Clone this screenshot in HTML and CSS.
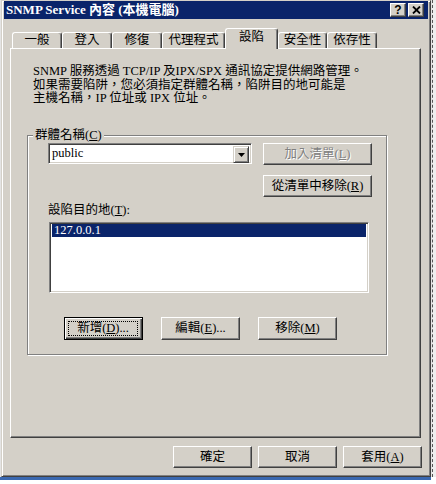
FILE: index.html
```html
<!DOCTYPE html>
<html lang="zh-Hant">
<head>
<meta charset="utf-8">
<title>SNMP Service 內容 (本機電腦)</title>
<link rel="stylesheet" href="styles.css">
</head>
<body>
<div class="screen">
  <div class="desk">
    <div class="win">
      <div class="titlebar">
        <div class="title">SNMP Service 內容 (本機電腦)</div>
        <div class="caps">
          <div class="cap cap-help">?</div>
          <div class="cap">
            <svg width="9" height="8" viewBox="0 0 9 8"><path d="M1 0.5 L8 7.5 M8 0.5 L1 7.5" stroke="#000" stroke-width="1.8" fill="none"/></svg>
          </div>
        </div>
      </div>

      <div class="tabs">
        <div class="tab w50">一般</div>
        <div class="tab w50">登入</div>
        <div class="tab w50">修復</div>
        <div class="tab w63">代理程式</div>
        <div class="tab sel">設陷</div>
        <div class="tab w49">安全性</div>
        <div class="tab w50">依存性</div>
      </div>

      <div class="panel">
        <div class="desc">SNMP 服務透過 TCP/IP 及IPX/SPX 通訊協定提供網路管理。<br>如果需要陷阱，您必須指定群體名稱，陷阱目的地可能是<br>主機名稱，IP 位址或 IPX 位址。</div>

        <div class="group">
          <div class="glabel">群體名稱(<u>C</u>)</div>
          <div class="row1">
            <div class="combo">
              <div class="combo-text">public</div>
              <div class="drop">
                <svg width="7" height="4" viewBox="0 0 7 4"><path d="M0 0 H7 L3.5 4 Z" fill="#000"/></svg>
              </div>
            </div>
            <div class="btn wide disabled">加入清單(<u>L</u>)</div>
          </div>
          <div class="btn wide row2">從清單中移除(<u>R</u>)</div>
          <div class="label2">設陷目的地(<u>T</u>):</div>
          <div class="listbox">
            <div class="item sel-item">127.0.0.1</div>
          </div>
          <div class="btnrow">
            <div class="btn default"><span class="focus">新增(<u>D</u>)...</span></div>
            <div class="btn">編輯(<u>E</u>)...</div>
            <div class="btn">移除(<u>M</u>)</div>
          </div>
        </div>
      </div>

      <div class="footer">
        <div class="btn fbtn">確定</div>
        <div class="btn fbtn">取消</div>
        <div class="btn fbtn">套用(<u>A</u>)</div>
      </div>
    </div>
    <div class="strip"></div>
  </div>
  <div class="bluebar"></div>
</div>
</body>
</html>
```

FILE: styles.css
```css
* { box-sizing: border-box; }
html, body { margin: 0; padding: 0; }
body {
  width: 436px;
  height: 484px;
  overflow: hidden;
  background: #ffffff;
  font-family: "Liberation Serif", "Noto Sans CJK TC", serif;
  font-size: 12.5px;
  color: #000;
}
u { text-decoration: underline; text-underline-offset: 1px; }

.screen { display: flex; flex-direction: column; width: 436px; height: 484px; }
.desk { display: flex; height: 477px; background: #e4e4e4; }

.win {
  margin-left: 1px;
  width: 430px;
  height: 477px;
  flex: none;
  background: #d4d0c8;
  border: 1px solid;
  border-color: #d4d0c8 #404040 #404040 #d4d0c8;
  box-shadow: inset 1px 1px 0 #fff, inset -1px -1px 0 #808080;
  padding: 0 2px 2px 2px;
  display: flex;
  flex-direction: column;
}

.strip {
  flex: 1;
  margin-left: 1px;
  border-left: 1px dashed #555;
  background: #eeeeee;
}

.bluebar { height: 3px; width: 431px; background: #3a68b0; }

/* title bar */
.titlebar {
  height: 18px;
  flex: none;
  background: #0a246a;
  display: flex;
  align-items: center;
  padding: 0 4px 0 2px;
  color: #fff;
  font-weight: bold;
  font-size: 13px;
}
.title { flex: 1; white-space: nowrap; line-height: 16px; }
.caps { display: flex; gap: 2px; }
.cap {
  width: 16px;
  height: 14px;
  background: #d4d0c8;
  border: 1px solid;
  border-color: #fff #404040 #404040 #fff;
  box-shadow: inset -1px -1px 0 #808080;
  display: flex;
  align-items: center;
  justify-content: center;
  color: #000;
}
.cap-help {
  font-family: "Liberation Sans", sans-serif;
  font-size: 12px;
  font-weight: bold;
  line-height: 12px;
  padding-bottom: 1px;
}

/* tabs */
.tabs {
  display: flex;
  align-items: flex-end;
  margin: 9px 0 0 6px;
  padding-left: 2px;
  height: 20px;
  flex: none;
}
.tab {
  height: 16px;
  flex: none;
  border-top: 1px solid #fff;
  border-left: 1px solid #fff;
  border-right: 1px solid #404040;
  box-shadow: inset -1px 0 0 #808080;
  border-radius: 3px 3px 0 0;
  text-align: center;
  line-height: 14px;
  white-space: nowrap;
  background: #d4d0c8;
}
.w49 { width: 49px; }
.w50 { width: 50px; }
.w63 { width: 63px; }
.tab.sel {
  width: 53px;
  height: 21px;
  margin-bottom: -1px;
  position: relative;
  z-index: 2;
  line-height: 17px;
}

/* panel */
.panel {
  width: 411px;
  height: 390px;
  margin-left: 6px;
  flex: none;
  border: 1px solid;
  border-color: #fff #404040 #404040 #fff;
  box-shadow: inset -1px -1px 0 #808080;
  padding: 16px 0 0 16px;
  display: flex;
  flex-direction: column;
}
.desc {
  margin-left: 6px;
  line-height: 13.5px;
  white-space: nowrap;
}

.group {
  margin-top: 29px;
  width: 360px;
  height: 220px;
  flex: none;
  border: 1px solid #808080;
  box-shadow: inset 1px 1px 0 #fff, 1px 1px 0 #fff;
  padding: 0 0 0 20px;
  display: flex;
  flex-direction: column;
  align-items: flex-start;
}
.glabel {
  margin: -8px 0 0 -15px;
  padding: 0 2px;
  background: #d4d0c8;
  line-height: 14px;
  white-space: nowrap;
}
.row1 {
  margin-top: 1px;
  display: flex;
  align-items: flex-start;
  gap: 11px;
}
.combo {
  width: 204px;
  height: 21px;
  border: 1px solid;
  border-color: #808080 #fff #fff #808080;
  box-shadow: inset 1px 1px 0 #404040, inset -1px -1px 0 #d4d0c8;
  background: #fff;
  padding: 2px 2px 2px 2px;
  display: flex;
}
.combo-text { flex: 1; padding-left: 1px; line-height: 15px; }
.drop {
  width: 16px;
  height: 17px;
  flex: none;
  background: #d4d0c8;
  border: 1px solid;
  border-color: #d4d0c8 #404040 #404040 #d4d0c8;
  box-shadow: inset 1px 1px 0 #fff, inset -1px -1px 0 #808080;
  display: flex;
  align-items: center;
  justify-content: center;
  padding-top: 1px;
}

.btn {
  width: 79px;
  height: 23px;
  flex: none;
  background: #d4d0c8;
  border: 1px solid;
  border-color: #fff #404040 #404040 #fff;
  box-shadow: inset -1px -1px 0 #808080;
  display: flex;
  align-items: center;
  justify-content: center;
  line-height: 14px;
  white-space: nowrap;
}
.btn.wide { width: 109px; height: 22px; }
.btn.disabled { color: #808080; text-shadow: 1px 1px 0 #fff; }
.row2 { margin: 10px 0 0 215px; }

.label2 { margin-top: 6px; line-height: 14px; white-space: nowrap; }

.listbox {
  margin: 5px 0 0 1px;
  width: 320px;
  height: 71px;
  border: 1px solid;
  border-color: #808080 #fff #fff #808080;
  box-shadow: inset 1px 1px 0 #404040, inset -1px -1px 0 #d4d0c8;
  background: #fff;
  padding: 1px 2px;
}
.item { height: 13px; line-height: 13px; padding-left: 2px; }
.sel-item { background: #0a246a; color: #fff; }

.btnrow {
  margin: 24px 0 0 16px;
  display: flex;
  gap: 18px;
}
.btn.default {
  border: 1px solid #000;
  box-shadow: inset 1px 1px 0 #fff, inset -1px -1px 0 #404040, inset -2px -2px 0 #808080;
  padding: 3px 4px 3px 3px;
}
.focus {
  flex: 1;
  align-self: stretch;
  border: 1px dotted #000;
  display: flex;
  align-items: center;
  justify-content: center;
}

.footer {
  margin-top: 8px;
  padding-right: 6px;
  display: flex;
  justify-content: flex-end;
  gap: 6px;
}
.fbtn { height: 22px; }
```
